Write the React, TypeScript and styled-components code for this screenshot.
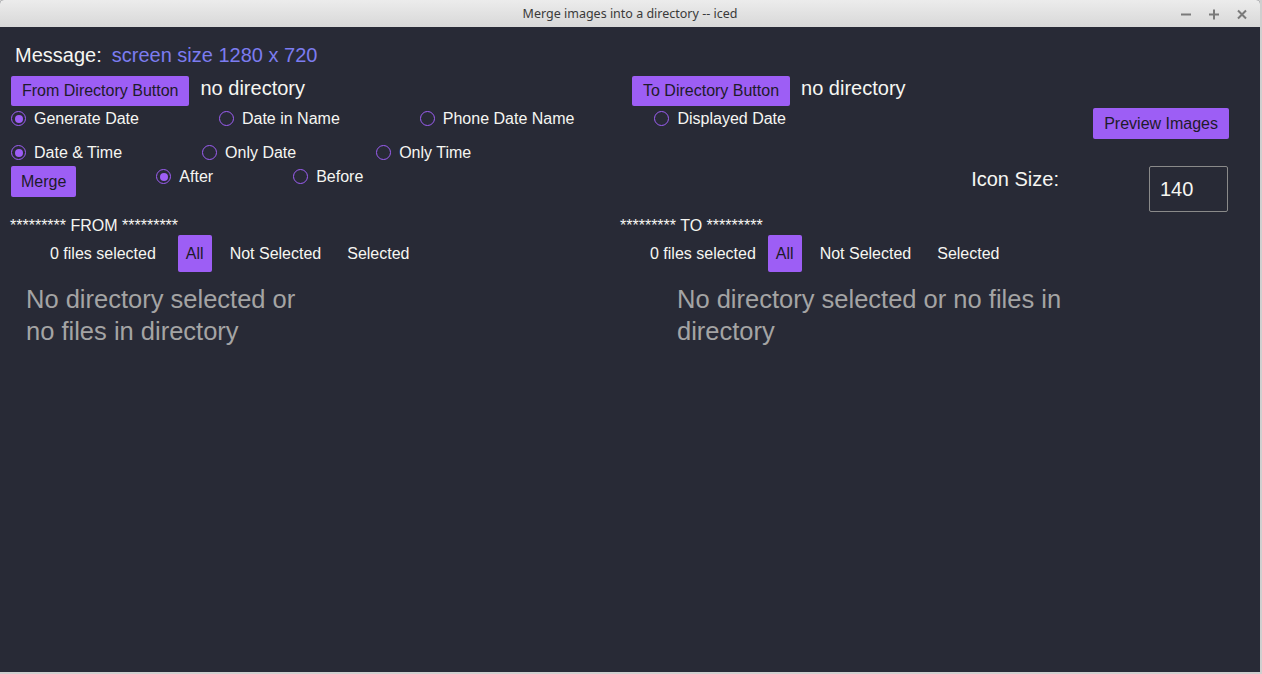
import React from "react";
import styled, { createGlobalStyle } from "styled-components";

const GlobalStyle = createGlobalStyle`
  html, body { margin: 0; padding: 0; background: #cfcfcf; }
  body {
    width: 1262px; height: 674px; overflow: hidden;
    font-family: "Liberation Sans", Arial, sans-serif;
  }
`;

const PURPLE = "#9d5ef5";
const TEXT = "#f6f6f2";
const BG = "#282a36";

const Frame = styled.div`
  width: 1260px;
  height: 672px;
  display: flex;
  flex-direction: column;
  background: ${BG};
  overflow: hidden;
  border-top-left-radius: 4px;
  border-top-right-radius: 4px;
`;

const TitleBar = styled.div`
  flex: 0 0 27px;
  display: grid;
  grid-template-columns: 1fr auto 1fr;
  align-items: center;
  background: linear-gradient(#ececec, #d8d8d8);
  font-family: "Noto Sans", "DejaVu Sans", sans-serif;
  font-size: 12.5px;
  color: #3a3a3a;
`;

const Title = styled.div`
  grid-column: 2;
  padding-bottom: 1px;
`;

const Controls = styled.div`
  grid-column: 3;
  justify-self: end;
  display: flex;
  align-items: center;
  gap: 16px;
  padding-right: 12px;
`;

const Content = styled.div`
  flex: 1;
  display: flex;
  flex-direction: column;
  padding: 17px 31px 0 11px;
  color: ${TEXT};
`;

const MessageRow = styled.div`
  display: flex;
  gap: 10px;
  font-size: 20px;
  line-height: 23px;
  padding-left: 4px;
`;

const MessageValue = styled.span`
  color: #7c7cf0;
`;

const DirRow = styled.div`
  display: flex;
  margin-top: 9px;
`;

const DirHalf = styled.div`
  flex: none;
  width: 621px;
  display: flex;
  align-items: flex-start;
  gap: 11px;
`;

const Button = styled.button<{ $h?: number; $px?: number }>`
  height: ${(p) => p.$h ?? 30}px;
  padding: 0 ${(p) => p.$px ?? 11}px;
  border: none;
  border-radius: 2px;
  background: ${PURPLE};
  color: #1d1b2a;
  font-family: "Liberation Sans", Arial, sans-serif;
  font-size: 16px;
  white-space: nowrap;
  flex: none;
`;

const DirText = styled.span`
  font-size: 20px;
  line-height: 23px;
  margin-top: 1px;
`;

const OptionRow = styled.div<{ $mt: number }>`
  display: flex;
  align-items: flex-start;
  gap: 80px;
  margin-top: ${(p) => p.$mt}px;
`;

const RadioItem = styled.label`
  display: flex;
  align-items: center;
  gap: 8px;
  height: 21px;
  font-size: 16px;
  white-space: nowrap;
`;

const Circle = styled.span<{ $on?: boolean }>`
  width: 15px;
  height: 15px;
  box-sizing: border-box;
  border: 1px solid ${PURPLE};
  border-radius: 50%;
  display: flex;
  align-items: center;
  justify-content: center;
  &::after {
    content: "";
    width: 8px;
    height: 8px;
    border-radius: 50%;
    background: ${(p) => (p.$on ? PURPLE : "transparent")};
  }
`;

const RightSlot = styled.div`
  margin-left: auto;
  display: flex;
  align-items: flex-start;
  gap: 90px;
`;

const IconLabel = styled.span`
  font-size: 20px;
  line-height: 23px;
  margin-top: 2px;
`;

const SizeInput = styled.div`
  width: 79px;
  height: 46px;
  box-sizing: border-box;
  border: 1px solid #8a8a8a;
  border-radius: 2px;
  display: flex;
  align-items: center;
  padding-left: 10px;
  font-size: 20px;
  margin-right: 1px;
`;

const Lists = styled.div`
  display: flex;
  margin-top: 4px;
  margin-left: -1px;
`;

const ListCol = styled.div<{ $w: number }>`
  flex: none;
  width: ${(p) => p.$w}px;
  display: flex;
  flex-direction: column;
`;

const Heading = styled.div`
  font-size: 16px;
  line-height: 19px;
`;

const FilesRow = styled.div<{ $pl: number }>`
  display: flex;
  align-items: center;
  height: 37px;
  padding-left: ${(p) => p.$pl}px;
  gap: 10px;
  font-size: 16px;
`;

const Count = styled.span<{ $mr: number }>`
  margin-right: ${(p) => p.$mr}px;
`;

const FilterButton = styled.span<{ $active?: boolean }>`
  height: 37px;
  display: flex;
  align-items: center;
  padding: 0 8px;
  background: ${(p) => (p.$active ? PURPLE : "transparent")};
  color: ${(p) => (p.$active ? "#1d1b2a" : TEXT)};
  border-radius: 2px;
`;

const Empty = styled.div<{ $pl: number; $mw: number }>`
  margin-top: 11px;
  padding-left: ${(p) => p.$pl}px;
  max-width: ${(p) => p.$mw}px;
  font-size: 25.5px;
  line-height: 32px;
  color: #a4a4a4;
`;

const Radio = ({ on, children }: { on?: boolean; children: React.ReactNode }) => (
  <RadioItem>
    <Circle $on={on} />
    {children}
  </RadioItem>
);

const Files = ({ pl, mr }: { pl: number; mr: number }) => (
  <FilesRow $pl={pl}>
    <Count $mr={mr}>0 files selected</Count>
    <FilterButton $active>All</FilterButton>
    <FilterButton>Not Selected</FilterButton>
    <FilterButton>Selected</FilterButton>
  </FilesRow>
);

export default function App() {
  return (
    <>
      <GlobalStyle />
      <Frame>
        <TitleBar>
          <Title>Merge images into a directory -- iced</Title>
          <Controls>
            <svg width="12" height="12" viewBox="0 0 12 12">
              <path d="M1 6.5h10" stroke="#7a7a7a" strokeWidth="2" />
            </svg>
            <svg width="12" height="12" viewBox="0 0 12 12">
              <path d="M1 6.5h10M6 1.5v10" stroke="#7a7a7a" strokeWidth="2" />
            </svg>
            <svg width="12" height="12" viewBox="0 0 12 12">
              <path d="M2 2.5l8 8M10 2.5l-8 8" stroke="#7a7a7a" strokeWidth="2" />
            </svg>
          </Controls>
        </TitleBar>
        <Content>
          <MessageRow>
            <span>Message:</span>
            <MessageValue>screen size 1280 x 720</MessageValue>
          </MessageRow>
          <DirRow>
            <DirHalf>
              <Button>From Directory Button</Button>
              <DirText>no directory</DirText>
            </DirHalf>
            <DirHalf>
              <Button>To Directory Button</Button>
              <DirText>no directory</DirText>
            </DirHalf>
          </DirRow>
          <OptionRow $mt={2}>
            <Radio on>Generate Date</Radio>
            <Radio>Date in Name</Radio>
            <Radio>Phone Date Name</Radio>
            <Radio>Displayed Date</Radio>
            <RightSlot>
              <Button $h={31}>Preview Images</Button>
            </RightSlot>
          </OptionRow>
          <OptionRow $mt={3}>
            <Radio on>Date &amp; Time</Radio>
            <Radio>Only Date</Radio>
            <Radio>Only Time</Radio>
          </OptionRow>
          <OptionRow $mt={3}>
            <Button $h={31} $px={10}>Merge</Button>
            <Radio on>After</Radio>
            <Radio>Before</Radio>
            <RightSlot>
              <IconLabel>Icon Size:</IconLabel>
              <SizeInput>140</SizeInput>
            </RightSlot>
          </OptionRow>
          <Lists>
            <ListCol $w={610}>
              <Heading>********* FROM *********</Heading>
              <Files pl={40} mr={12} />
              <Empty $pl={16} $mw={300}>
                No directory selected or no files in directory
              </Empty>
            </ListCol>
            <ListCol $w={600}>
              <Heading>********* TO *********</Heading>
              <Files pl={30} mr={2} />
              <Empty $pl={57} $mw={460}>
                No directory selected or no files in directory
              </Empty>
            </ListCol>
          </Lists>
        </Content>
      </Frame>
    </>
  );
}
